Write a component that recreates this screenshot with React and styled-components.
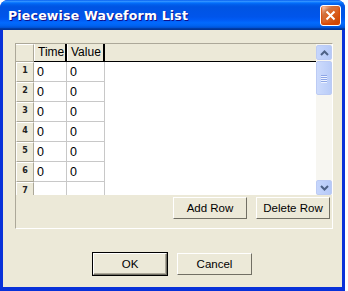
import styled, { createGlobalStyle } from "styled-components";

const GlobalStyle = createGlobalStyle`
  html, body {
    margin: 0;
    padding: 0;
    background: #ffffff;
  }
  body {
    font-family: "Liberation Sans", Arial, sans-serif;
    font-size: 11px;
    color: #000;
  }
`;

// window shell
const Window = styled.div`
  width: 345px;
  height: 291px;
  display: flex;
  flex-direction: column;
  background: #0831d9;
  border-radius: 8px 8px 0 0;
  overflow: hidden;
`;

const TitleBar = styled.div`
  height: 30px;
  flex: none;
  display: flex;
  align-items: center;
  justify-content: space-between;
  padding: 0 4px 0 8px;
  background: linear-gradient(
    to bottom,
    #0058ee 0%,
    #3593ff 4%,
    #288eff 6%,
    #127dff 8%,
    #036ffc 10%,
    #0262ee 14%,
    #0057e5 20%,
    #0054e3 24%,
    #0055eb 56%,
    #005bf5 66%,
    #026afe 76%,
    #0062ef 86%,
    #0052d6 92%,
    #0040ab 94%,
    #003092 100%
  );
`;

const Title = styled.span`
  color: #fff;
  font-family: "DejaVu Sans", "Liberation Sans", sans-serif;
  font-weight: bold;
  font-size: 12.5px;
  letter-spacing: 0.2px;
  text-shadow: 1px 1px #0f1089;
  padding-top: 1px;
`;

const CloseBtn = styled.div`
  width: 19px;
  height: 19px;
  border: 1px solid #fff;
  border-radius: 3px;
  display: flex;
  align-items: center;
  justify-content: center;
  background: radial-gradient(
    circle at 90% 90%,
    #cc4600 0%,
    #dc6527 55%,
    #cd7546 70%,
    #ffccb2 90%,
    #fff 100%
  );
  box-shadow: inset 0 -1px 2px 1px #da4600;
`;

const Body = styled.div`
  flex: 1;
  margin: 0 3px 4px;
  background: #ece9d8;
  padding: 13px 0 0 12px;
  display: flex;
  flex-direction: column;
`;

const Frame = styled.div`
  width: 316px;
  height: 184px;
  border: 1px solid;
  border-color: #aca899 #ffffff #ffffff #aca899;
  display: flex;
  flex-direction: column;
`;

// grid
const GridView = styled.div`
  height: 151px;
  display: flex;
  background: #fff;
  overflow: hidden;
`;

const Sheet = styled.div`
  flex: 1;
  display: flex;
  flex-direction: column;
`;

const HeaderRow = styled.div`
  height: 17px;
  flex: none;
  display: flex;
  background: #ece9d8;
  border-bottom: 1px solid #000;
`;

const Corner = styled.div`
  width: 18px;
  box-sizing: border-box;
  border-right: 1px solid #aca899;
  border-bottom: 1px solid #aca899;
  border-top: 1px solid #fff;
  margin-bottom: -1px;
  background: #ece9d8;
`;

const HeadCell = styled.div`
  width: ${(p) => p.$w}px;
  box-sizing: border-box;
  border-right: 2px solid #000;
  border-left: 1px solid #fff;
  padding: 1px 0 0 3px;
  font-size: 12px;
  line-height: 15px;
`;

const Row = styled.div`
  height: 20px;
  flex: none;
  display: flex;
`;

const RowHead = styled.div`
  width: 18px;
  box-sizing: border-box;
  background: #ece9d8;
  border-top: 1px solid #fff;
  border-left: 1px solid #fff;
  border-right: 1px solid #aca899;
  border-bottom: 1px solid #aca899;
  font-family: "DejaVu Sans", sans-serif;
  font-size: 8px;
  line-height: 8px;
  font-weight: bold;
  color: #222;
  text-align: center;
  padding-top: 4px;
`;

const Cell = styled.div`
  width: ${(p) => p.$w}px;
  box-sizing: border-box;
  border-right: 1px solid #c8c8c8;
  border-bottom: 1px solid #c8c8c8;
  padding: 3px 0 0 3px;
  font-size: 12.5px;
  line-height: 14px;
`;

// scrollbar
const ScrollBar = styled.div`
  width: 16px;
  flex: none;
  display: flex;
  flex-direction: column;
  background: #f7f6f1;
  padding-top: 1px;
`;

const ScrollBtn = styled.div`
  height: 15px;
  box-sizing: border-box;
  border: 1px solid #bccbf4;
  border-radius: 2px;
  background: linear-gradient(to right, #c6d6fc, #b5c9f7);
  display: flex;
  align-items: center;
  justify-content: center;
`;

const Thumb = styled(ScrollBtn)`
  height: 34px;
  margin-top: 1px;
  background: linear-gradient(to right, #cddbfc, #b9ccf8);
  flex-direction: column;
  gap: 1px;
`;

const Grip = styled.div`
  width: 6px;
  height: 1px;
  background: #8ea6e6;
  box-shadow: 0 1px #eef3ff;
`;

const Track = styled.div`
  flex: 1;
`;

// buttons
const ToolRow = styled.div`
  display: flex;
  justify-content: flex-end;
  gap: 9px;
  padding: 2px 2px 0 0;
`;

const Button = styled.button`
  width: ${(p) => p.$w || 74}px;
  height: 22px;
  box-sizing: border-box;
  font-family: "Liberation Sans", Arial, sans-serif;
  font-size: 11.5px;
  color: #000;
  background: #ece9d8;
  padding: 0;
  border: 1px solid;
  border-color: #fff #716f64 #716f64 #fff;
  box-shadow: inset -1px -1px #aca899, ${(p) => (p.$default ? "0 0 0 1px #000" : "none")};
`;

const Footer = styled.div`
  display: flex;
  justify-content: center;
  gap: 10px;
  margin-top: 24px;
  padding-right: 12px;
`;

const Chevron = ({ up }) => (
  <svg width="9" height="6" viewBox="0 0 9 6">
    <path
      d={up ? "M1 5 L4.5 1.5 L8 5" : "M1 1 L4.5 4.5 L8 1"}
      fill="none"
      stroke="#4d6185"
      strokeWidth="2"
    />
  </svg>
);

const rows = [1, 2, 3, 4, 5, 6, 7];

export default function App() {
  return (
    <>
      <GlobalStyle />
      <Window>
        <TitleBar>
          <Title>Piecewise Waveform List</Title>
          <CloseBtn>
            <svg width="11" height="11" viewBox="0 0 11 11">
              <path d="M1.5 1.5 L9.5 9.5 M9.5 1.5 L1.5 9.5" stroke="#fff" strokeWidth="2" />
            </svg>
          </CloseBtn>
        </TitleBar>
        <Body>
          <Frame>
            <GridView>
              <Sheet>
                <HeaderRow>
                  <Corner />
                  <HeadCell $w={33}>Time</HeadCell>
                  <HeadCell $w={38}>Value</HeadCell>
                </HeaderRow>
                {rows.map((n) => (
                  <Row key={n}>
                    <RowHead>{n}</RowHead>
                    <Cell $w={33}>{n < 7 ? "0" : ""}</Cell>
                    <Cell $w={38}>{n < 7 ? "0" : ""}</Cell>
                  </Row>
                ))}
              </Sheet>
              <ScrollBar>
                <ScrollBtn>
                  <Chevron up />
                </ScrollBtn>
                <Thumb>
                  <Grip />
                  <Grip />
                  <Grip />
                  <Grip />
                </Thumb>
                <Track />
                <ScrollBtn>
                  <Chevron />
                </ScrollBtn>
              </ScrollBar>
            </GridView>
            <ToolRow>
              <Button>Add Row</Button>
              <Button>Delete Row</Button>
            </ToolRow>
          </Frame>
          <Footer>
            <Button $default>OK</Button>
            <Button $w={75}>Cancel</Button>
          </Footer>
        </Body>
      </Window>
    </>
  );
}
